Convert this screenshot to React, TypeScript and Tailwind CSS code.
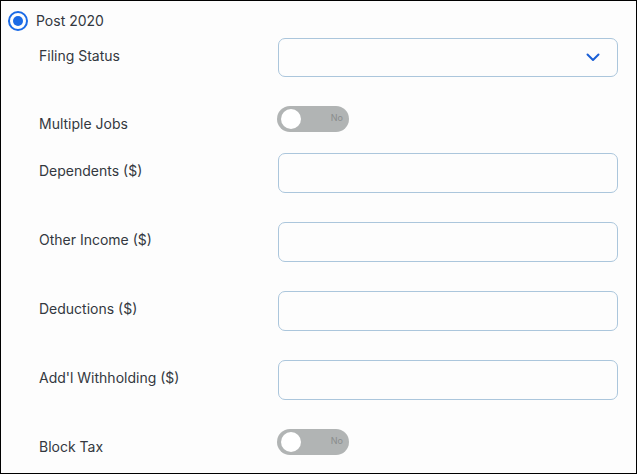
import React from 'react'

const font = { fontFamily: 'Inter, "Liberation Sans", sans-serif' }

function Toggle() {
  return (
    <div className="relative w-[72px] h-[26px] rounded-full bg-[#b1b4b4]">
      <div className="absolute left-[4px] top-[3px] w-[20px] h-[20px] rounded-full bg-white" />
      <span className="absolute right-[6px] top-[6px] text-[9px] leading-[12px] text-[#8a8d8d]">No</span>
    </div>
  )
}

function Field({ label, children, mt, labelPt }: { label: string; children: React.ReactNode; mt: string; labelPt: string }) {
  return (
    <div className={`flex ${mt}`}>
      <div className={`w-[240px] shrink-0 pl-[38px] ${labelPt} text-[14px] leading-[18px] text-[#333840]`}>{label}</div>
      {children}
    </div>
  )
}

function Input() {
  return <div className="w-[340px] h-[40px] rounded-[7px] border border-[#abc6dc] bg-[#fdfdfd]" />
}

export default function App() {
  return (
    <div style={font} className="w-[637px] h-[474px] border border-black bg-[#fdfdfd] overflow-hidden">
      <div className="flex items-center gap-[8px] pl-[7px] pt-[10px]">
        <div className="w-[20px] h-[20px] rounded-full border-[2px] border-[#1a6ae6] flex items-center justify-center">
          <div className="w-[10px] h-[10px] rounded-full bg-[#1a6ae6]" />
        </div>
        <span className="text-[14px] leading-[20px] text-[#333840]">Post 2020</span>
      </div>
      <Field label="Filing Status" mt="mt-[7px]" labelPt="pt-[9px]">
        <div className="ml-[37px] w-[340px] h-[39px] rounded-[7px] border border-[#abc6dc] flex items-center justify-end pr-[17px]">
          <svg width="14" height="9" viewBox="0 0 14 9" fill="none">
            <path d="M1.5 1.5 L7 7 L12.5 1.5" stroke="#1a5fd6" strokeWidth="2" strokeLinecap="round" strokeLinejoin="round" />
          </svg>
        </div>
      </Field>
      <Field label="Multiple Jobs" mt="mt-[29px]" labelPt="pt-[9px]">
        <div className="ml-[36px]"><Toggle /></div>
      </Field>
      <Field label="Dependents ($)" mt="mt-[20px]" labelPt="pt-[9px]">
        <div className="ml-[37px]"><Input /></div>
      </Field>
      <Field label="Other Income ($)" mt="mt-[29px]" labelPt="pt-[9px]">
        <div className="ml-[37px]"><Input /></div>
      </Field>
      <Field label="Deductions ($)" mt="mt-[29px]" labelPt="pt-[9px]">
        <div className="ml-[37px]"><Input /></div>
      </Field>
      <Field label="Add'l Withholding ($)" mt="mt-[29px]" labelPt="pt-[9px]">
        <div className="ml-[37px]"><Input /></div>
      </Field>
      <Field label="Block Tax" mt="mt-[29px]" labelPt="pt-[9px]">
        <div className="ml-[36px]"><Toggle /></div>
      </Field>
    </div>
  )
}
